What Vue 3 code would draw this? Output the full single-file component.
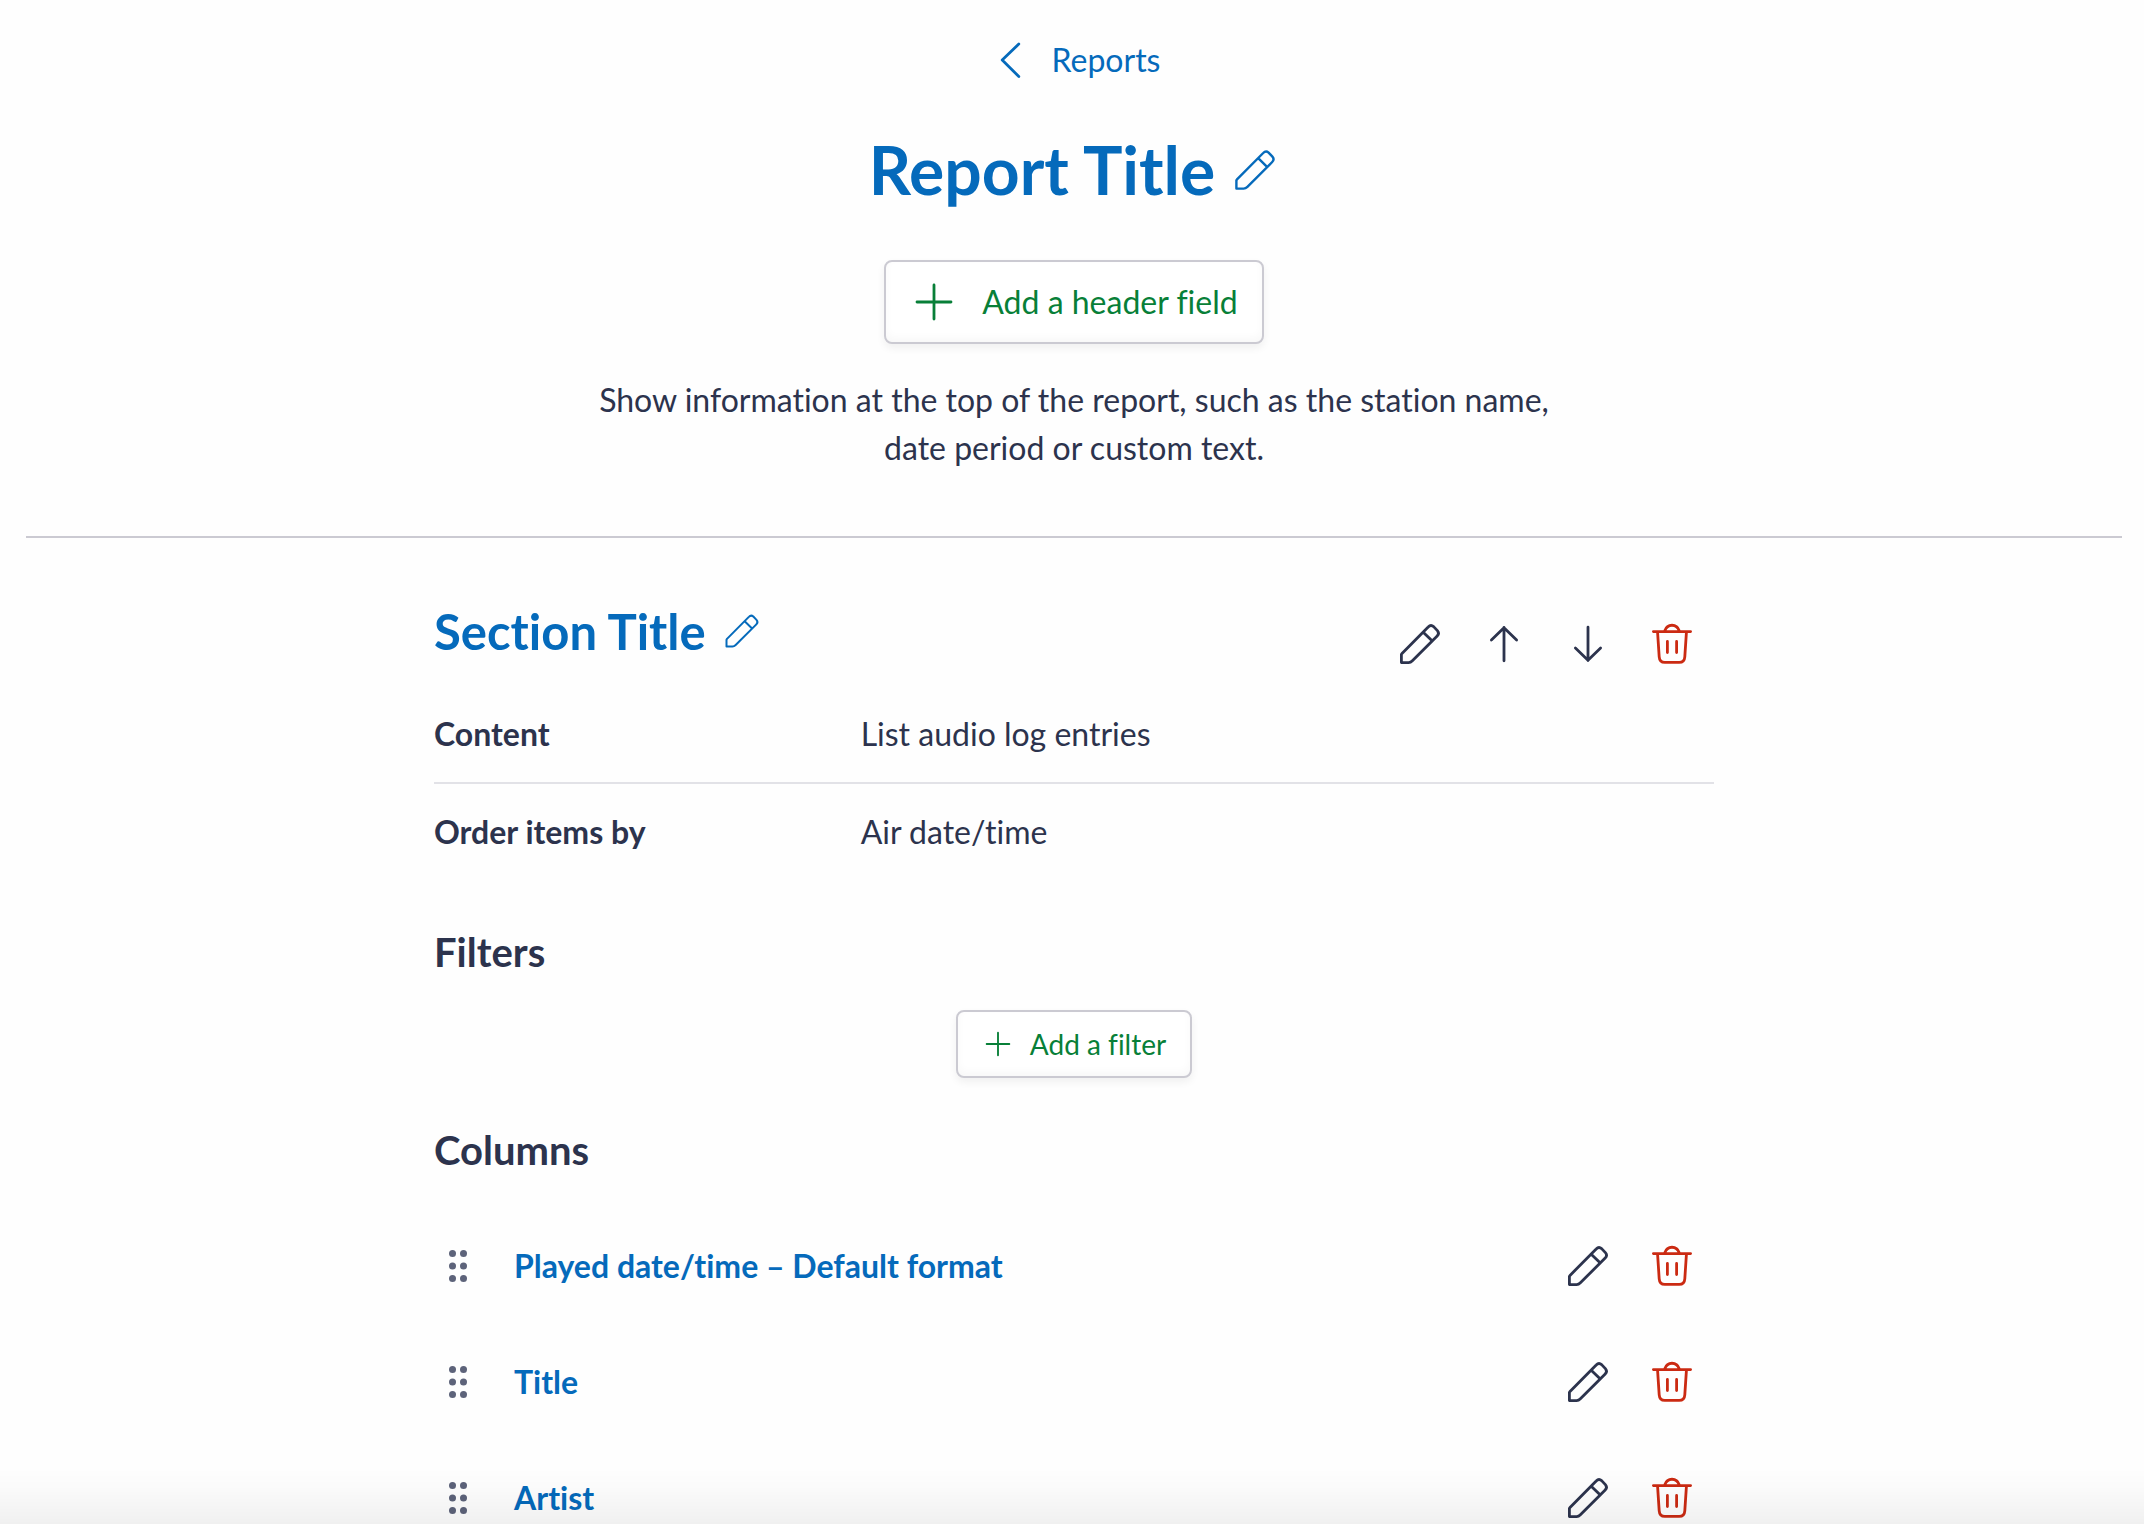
<template>
  <main class="page">
    <header class="report-header">
      <a class="back-link" href="#reports">
        <svg class="icon" viewBox="0 0 24 24"><path d="M15.4 4L7.1 12L15.4 20.2" /></svg>
        Reports
      </a>

      <h1>
        <button type="button" class="title-button">
          Report Title
          <svg class="icon icon-thin" viewBox="0 0 24 24"><path :d="icons.pencil" /></svg>
        </button>
      </h1>

      <button type="button" class="add-button">
        <svg class="icon" viewBox="0 0 24 24"><path :d="icons.plus" /></svg>
        Add a header field
      </button>

      <p class="hint">
        Show information at the top of the report, such as the station name, date period or custom text.
      </p>
    </header>

    <section class="report-section">
      <div class="section-head">
        <h2>
          <button type="button" class="title-button">
            Section Title
            <svg class="icon icon-medium icon-thin" viewBox="0 0 24 24"><path :d="icons.pencil" /></svg>
          </button>
        </h2>
        <div class="actions">
          <button
            v-for="action in sectionActions"
            :key="action.label"
            type="button"
            class="icon-button"
            :class="{ danger: action.icon === 'trash' }"
            :aria-label="action.label"
          >
            <svg class="icon" viewBox="0 0 24 24"><path :d="icons[action.icon]" /></svg>
          </button>
        </div>
      </div>

      <dl class="details">
        <div v-for="item in details" :key="item.label" class="detail-row">
          <dt>{{ item.label }}</dt>
          <dd>{{ item.value }}</dd>
        </div>
      </dl>

      <h3>Filters</h3>
      <button type="button" class="add-button add-button-small">
        <svg class="icon icon-small" viewBox="0 0 24 24"><path :d="icons.plus" /></svg>
        Add a filter
      </button>

      <h3>Columns</h3>
      <ul class="columns">
        <li v-for="column in columns" :key="column" class="column-row">
          <svg class="drag-handle" viewBox="0 0 48 48">
            <template v-for="y in [11.5, 24, 36.5]" :key="y">
              <circle cx="18.5" :cy="y" r="3.5" />
              <circle cx="29.5" :cy="y" r="3.5" />
            </template>
          </svg>
          <a class="column-name" href="#column">{{ column }}</a>
          <button type="button" class="icon-button" aria-label="Edit column">
            <svg class="icon" viewBox="0 0 24 24"><path :d="icons.pencil" /></svg>
          </button>
          <button type="button" class="icon-button danger" aria-label="Delete column">
            <svg class="icon" viewBox="0 0 24 24"><path :d="icons.trash" /></svg>
          </button>
        </li>
      </ul>
    </section>

    <div class="bottom-fade"></div>
  </main>
</template>

<script setup>
const icons = {
  pencil: 'M2.7 21.3V17.2L3 16.7L16.1 3.5Q17.4 2.1 18.8 3.3L20.7 5.3Q21.9 6.7 20.6 8L8.2 20.4Q7.3 21.3 6.3 21.3ZM13.6 6.1L17.9 10.3',
  plus: 'M12 3.5V20.5M3.5 12H20.5',
  up: 'M12 3.7V20.4M5.7 10L12 3.9L18.3 10',
  down: 'M12 3.6V20.3M5.7 14L12 20.1L18.3 14',
  trash: 'M2.7 5.8H21.3M8.4 5.4C9.6 1.7 14.4 1.7 15.6 5.4M4.8 6.3L5.6 18.4Q5.8 21.2 8.4 21.2H15.6Q18.2 21.2 18.4 18.4L19.2 6.3M9.7 10.7V16.3M14.3 10.7V16.3'
};

const sectionActions = [
  { icon: 'pencil', label: 'Edit section' },
  { icon: 'up', label: 'Move section up' },
  { icon: 'down', label: 'Move section down' },
  { icon: 'trash', label: 'Delete section' }
];

const details = [
  { label: 'Content', value: 'List audio log entries' },
  { label: 'Order items by', value: 'Air date/time' }
];

const columns = ['Played date/time – Default format', 'Title', 'Artist'];
</script>

<style>
body {
  background: #fefefe;
}
</style>

<style scoped>
.page {
  height: 100vh;
  overflow-y: auto;
  scrollbar-width: none;
  box-sizing: border-box;
  padding: 0 22px 0 26px;
  color: #2c334d;
  font-family: Lato, sans-serif;
  font-size: 32px;
  font-variant-ligatures: none;
  line-height: 48px;
}

button {
  font: inherit;
  font-variant-ligatures: none;
  color: inherit;
  background: none;
  border: 0;
  padding: 0;
  cursor: pointer;
}

a {
  color: #056abb;
  text-decoration: none;
}

h1,
h2,
h3,
p,
dl,
dd,
ul {
  margin: 0;
  padding: 0;
}

.icon {
  flex-shrink: 0;
  width: 48px;
  height: 48px;
  fill: none;
  stroke: currentColor;
  stroke-width: 1.4;
  stroke-linecap: round;
  stroke-linejoin: round;
}

.icon-thin {
  stroke-width: 1.2;
}

.icon-medium {
  width: 40px;
  height: 40px;
}

.icon-small {
  width: 32px;
  height: 32px;
}

.report-header {
  display: flex;
  flex-direction: column;
  align-items: center;
  padding: 36px 0 64px;
  border-bottom: 2px solid #cbcad2;
}

.back-link {
  display: flex;
  align-items: center;
  gap: 16px;
}

h1 {
  margin: 48px 0 52px;
  font-size: 66px;
  line-height: 76px;
}

.title-button {
  display: flex;
  align-items: center;
  gap: 16px;
  color: #056abb;
}

.add-button {
  display: flex;
  align-items: center;
  gap: 24px;
  padding: 16px 24px;
  color: #087f38;
  background: #fff;
  border: 2px solid #cbcad2;
  border-radius: 8px;
  box-shadow: 0 4px 8px rgba(0, 0, 0, 0.06), inset 0 -4px 8px rgba(0, 0, 0, 0.03);
}

.add-button-small {
  gap: 16px;
  margin: 0 auto;
  font-size: 28px;
  line-height: 32px;
}

.hint {
  max-width: 960px;
  margin-top: 32px;
  text-align: center;
}

.report-section {
  max-width: 1280px;
  margin: 0 auto;
  padding-top: 64px;
}

.section-head {
  display: flex;
  justify-content: space-between;
}

h2 {
  font-size: 49px;
  line-height: 58px;
}

.actions {
  display: flex;
}

.icon-button {
  display: flex;
  align-items: center;
  justify-content: center;
  width: 84px;
  height: 84px;
}

.danger {
  color: #cb2a12;
}

.detail-row {
  display: grid;
  grid-template-columns: 1fr 2fr;
  padding: 24px 0;
}

.detail-row + .detail-row {
  border-top: 2px solid #e2e2e7;
}

dt {
  font-weight: 700;
}

h3 {
  font-size: 40px;
  line-height: 48px;
  margin: 48px 0 34px;
}

.columns {
  list-style: none;
}

.column-row {
  display: flex;
  align-items: center;
  padding: 16px 0;
}

.drag-handle {
  width: 48px;
  height: 48px;
  margin-right: 32px;
  fill: #5d637a;
}

.column-name {
  flex: 1;
  font-weight: 700;
}

.bottom-fade {
  position: fixed;
  right: 0;
  bottom: 0;
  left: 0;
  height: 56px;
  background: linear-gradient(rgba(0, 0, 0, 0), rgba(0, 0, 0, 0.015) 40%, rgba(0, 0, 0, 0.055));
  pointer-events: none;
}
</style>
